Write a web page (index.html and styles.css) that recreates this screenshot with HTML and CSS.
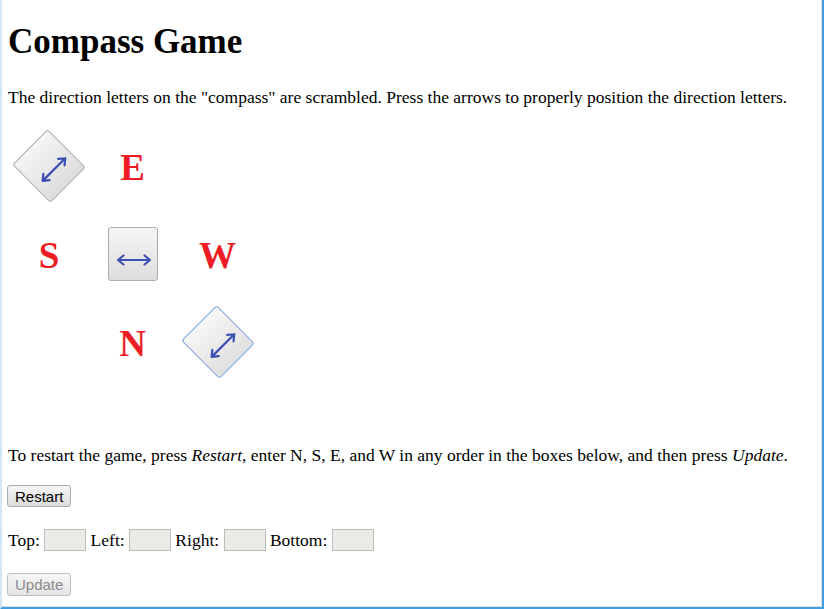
FILE: index.html
```html
<!DOCTYPE html>
<html>
<head>
<meta charset="utf-8">
<title>Compass Game</title>
<link rel="stylesheet" href="styles.css">
</head>
<body>
<div class="frame">
  <h1>Compass Game</h1>
  <p class="intro">The direction letters on the "compass" are scrambled. Press the arrows to properly position the direction letters.</p>
  <div class="compass">
    <button class="dir rot" type="button"><svg viewBox="0 0 36 12" width="36" height="12"><path d="M2 6H34M7.5 1.5L2 6L7.5 10.5M28.5 1.5L34 6L28.5 10.5"/></svg></button>
    <span class="letter">E</span>
    <span></span>
    <span class="letter">S</span>
    <button class="dir" type="button"><svg viewBox="0 0 36 12" width="36" height="12"><path d="M2 6H34M7.5 1.5L2 6L7.5 10.5M28.5 1.5L34 6L28.5 10.5"/></svg></button>
    <span class="letter">W</span>
    <span></span>
    <span class="letter">N</span>
    <button class="dir rot hover" type="button"><svg viewBox="0 0 36 12" width="36" height="12"><path d="M2 6H34M7.5 1.5L2 6L7.5 10.5M28.5 1.5L34 6L28.5 10.5"/></svg></button>
  </div>
  <p class="help">To restart the game, press <i>Restart</i>, enter N, S, E, and W in any order in the boxes below, and then press <i>Update</i>.</p>
  <p class="ctl r1"><button class="btn" type="button">Restart</button></p>
  <p class="ctl r2">Top: <input class="box" type="text" disabled> Left: <input class="box" type="text" disabled> Right: <input class="box" type="text" disabled> Bottom: <input class="box" type="text" disabled></p>
  <p class="ctl r3"><button class="btn off" type="button">Update</button></p>
</div>
</body>
</html>
```

FILE: styles.css
```css
html, body {
  margin: 0;
  padding: 0;
  background: #ffffff;
}
.frame {
  box-sizing: border-box;
  width: 824px;
  height: 609px;
  overflow: hidden;
  border-left: 2px solid #d2e7f6;
  border-right: 2px solid #3f9de0;
  border-bottom: 2px solid #3f9de0;
  box-shadow: inset -1px -1px 0 #dedede;
  padding: 8px 6px 0 6px;
  font-family: "Liberation Serif", "Times New Roman", serif;
  font-size: 17.5px;
  line-height: 20px;
  color: #000;
}
.frame h1 {
  font-size: 35px;
  line-height: 40px;
  font-weight: bold;
  margin: 14px 0 0 0;
}
.frame p {
  margin: 0;
}
.intro {
  padding-top: 25px;
}
.compass {
  display: grid;
  grid-template-columns: 82px 85px 85px;
  grid-auto-rows: 88px;
  place-items: center;
  margin-top: 15px;
}
.letter {
  color: #ee1c25;
  font-weight: bold;
  font-size: 37px;
  line-height: 40px;
  margin-top: 4px;
}
.dir {
  box-sizing: border-box;
  width: 50px;
  height: 54px;
  margin: 0;
  padding: 12px 0 0 2px;
  border: 1px solid #acacac;
  border-radius: 3px;
  background: linear-gradient(#f5f5f5, #dddddd);
  display: flex;
  align-items: center;
  justify-content: center;
}
.dir svg path {
  fill: none;
  stroke: #3d4fb3;
  stroke-width: 2.2;
  stroke-linecap: round;
  stroke-linejoin: round;
}
.rot {
  transform: rotate(-45deg);
}
.hover {
  border-color: #7ea4d8;
  background: linear-gradient(#f7f7f7, #e0e0e0);
}
.frame .help {
  margin-top: 59px;
}
.frame .r1 {
  margin-top: 20px;
  line-height: 22px;
}
.frame .r2 {
  margin-top: 22px;
  line-height: 22px;
}
.frame .r3 {
  margin-top: 22px;
  line-height: 23px;
}
.btn {
  box-sizing: border-box;
  height: 22px;
  vertical-align: top;
  font-family: "Liberation Sans", Arial, sans-serif;
  font-size: 15px;
  line-height: 17px;
  padding: 1px 7px;
  margin: 0 0 0 -1px;
  border: 1px solid #acacac;
  border-radius: 3px;
  background: linear-gradient(#f6f6f6, #dcdcdc);
  color: #000;
}
.btn.off {
  height: 23px;
  color: #8b8b8b;
  border-color: #bfbfbf;
  background: linear-gradient(#f6f6f6, #e4e4e4);
}
.box {
  box-sizing: border-box;
  width: 42px;
  height: 22px;
  margin: 0;
  padding: 0;
  border: 1px solid #bcbcbc;
  background: #ebebe5;
  vertical-align: top;
}
```
